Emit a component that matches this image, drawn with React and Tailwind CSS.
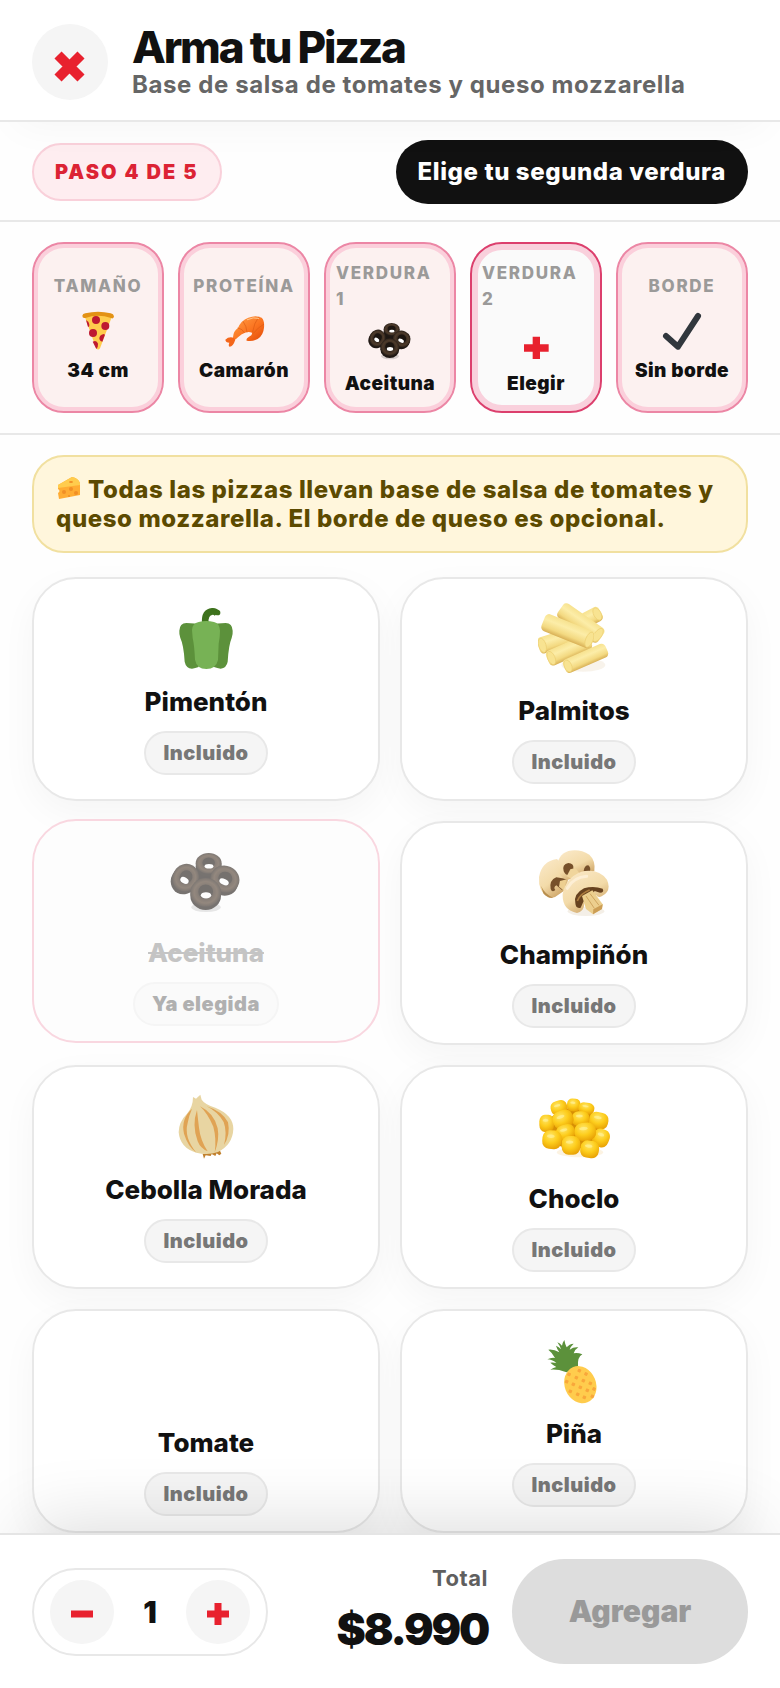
import React, { useState } from 'react';
import clsx from 'clsx';

const PizzaIcon = ({ className }) => (
    <svg viewBox="222 252 144 144" className={className} aria-hidden="true">
        <path d="M254 286 Q294 270 336 286 L300 382 Q294 390 288 381 Z" fill="#ffcc4d" />
        <g fill="#be1931">
            <circle cx="288" cy="297" r="12" />
            <circle cx="316" cy="315" r="12" />
            <circle cx="279" cy="336" r="12" />
            <path d="M258 297 Q269 303 268 316 L264 318 Z" />
            <path d="M311 339 Q297 342 298 354 Q301 362 307 362 L315 341 Z" />
            <path d="M278 362 Q290 356 294 368 Q295 377 289 384 Z" />
        </g>
        <path d="M247 284 Q248 278 256 277 Q294 268 332 277 Q341 279 342 286 Q341 295 333 291 Q294 278 256 291 Q247 293 247 284 Z" fill="#e39215" />
    </svg>
);

const ShrimpIcon = ({ className }) => (
    <svg viewBox="660 252 144 144" className={className} aria-hidden="true">
        <defs>
            <linearGradient id="shrimp" x1="0" y1="0" x2="1" y2="1">
                <stop offset="0" stopColor="#ffa24a" />
                <stop offset="0.55" stopColor="#fb7420" />
                <stop offset="1" stopColor="#e24a08" />
            </linearGradient>
        </defs>
        <path d="M699 349 Q700 330 714 321 Q722 299 745 290 Q768 281 785 290 Q794 298 792 320 Q790 343 773 354 Q756 363 740 359 Q737 352 747 347 Q758 343 756 335 Q746 331 735 335 Q724 339 714 349 Q706 358 700 357 Z" fill="url(#shrimp)" />
        <path d="M701 350 Q686 346 676 356 Q677 365 688 365 Q684 374 689 377 Q699 377 706 356 Z" fill="#f4661a" />
        <path d="M714 321 Q728 323 733 335 M730 302 Q740 316 741 333 M776 288 Q762 306 758 332 M791 310 Q775 318 760 337" fill="none" stroke="#dd5a14" strokeWidth="2" strokeLinecap="round" />
        <path d="M742 296 Q760 287 776 292" fill="none" stroke="#ffc58c" strokeWidth="3" strokeLinecap="round" />
    </svg>
);

const OLIVE_RINGS = [
    { cx: 560, cy: 160, rx: 39, ry: 31, tilt: 0 },
    { cx: 491, cy: 203, rx: 39, ry: 42, tilt: 30 },
    { cx: 609, cy: 207, rx: 44, ry: 40, tilt: 25 },
    { cx: 551, cy: 247, rx: 46, ry: 43, tilt: 0 },
];

const OliveIcon = ({ className }) => (
    <svg viewBox="444 105 216 234" className={className} aria-hidden="true">
        <defs>
            <radialGradient id="olive">
                <stop offset="0.4" stopColor="#33261d" />
                <stop offset="0.75" stopColor="#4e3b2b" />
                <stop offset="1" stopColor="#2a2019" />
            </radialGradient>
        </defs>
        <ellipse cx="552" cy="292" rx="44" ry="14" fill="#000" opacity="0.15" />
        <path d="M500 190 L545 165 L600 190 L600 240 L520 245 Z" fill="#1e1713" />
        {OLIVE_RINGS.map((r) => (
            <g key={r.cx} transform={`rotate(${r.tilt} ${r.cx} ${r.cy})`}>
                <ellipse cx={r.cx} cy={r.cy + 10} rx={r.rx} ry={r.ry} fill="#1f1814" />
                <ellipse cx={r.cx} cy={r.cy} rx={r.rx} ry={r.ry} fill="url(#olive)" />
                <ellipse cx={r.cx} cy={r.cy - 2} rx={r.rx * 0.48} ry={r.ry * 0.5} fill="#1c1510" />
                <ellipse cx={r.cx + 1} cy={r.cy + 9} rx={r.rx * 0.34} ry={r.ry * 0.22} fill="#fff" />
            </g>
        ))}
    </svg>
);

const StepPlusIcon = ({ className }) => (
    <svg viewBox="396 291 144 144" className={className} aria-hidden="true">
        <path d="M458 347 H480 V370 H506 V392 H480 V414 H458 V392 H432 V370 H458 Z" fill="#e8212e" />
    </svg>
);

const CheckIcon = ({ className }) => (
    <svg viewBox="834 252 144 144" className={className} aria-hidden="true">
        <path d="M858 345 L894 377 L954 285" fill="none" stroke="#31373d" strokeWidth="18" strokeLinecap="round" strokeLinejoin="round" />
    </svg>
);

const CheeseIcon = ({ className }) => (
    <svg viewBox="0 0 26 24" className={className} aria-hidden="true">
        <path d="M2 9 L16 1 Q22 2 24 7 L24 19 L3 23 L2 17 Q5 15 2 13 Z" fill="#ffac33" />
        <path d="M2 9 L16 1 Q22 2 24 7 L24 9 L2 12 Z" fill="#ffcc4d" />
        <g fill="#f18f26">
            <circle cx="8" cy="16" r="2" />
            <circle cx="15" cy="13" r="2" />
            <circle cx="20" cy="17" r="2" />
            <circle cx="13" cy="20" r="1" />
            <ellipse cx="15" cy="6" rx="2" ry="1" />
        </g>
    </svg>
);

const PepperIcon = ({ className }) => (
    <svg viewBox="450 114 216 207" className={className} aria-hidden="true">
        <path d="M556 174 Q553 142 577 139 Q586 138 592 146" fill="none" stroke="#3e721d" strokeWidth="20" strokeLinejoin="round" />
        <circle cx="593" cy="143" r="8" fill="#3e721d" />
        <path d="M478 197 Q479 175 499 174 L536 176 V306 Q526 310 516 311 Q498 310 494 290 Q491 240 481 219 Q477 208 478 197 Z M638 197 Q637 175 617 174 L582 176 V306 Q592 310 602 311 Q620 308 623 290 Q626 240 635 219 Q639 208 638 197 Z" fill="#5c913b" />
        <path d="M516 195 Q517 175 536 171 Q558 165 582 171 Q599 175 600 197 Q600 215 596 236 L594 285 Q588 312 559 312 Q530 311 525 284 Q523 240 518 219 Z" fill="#77b255" />
    </svg>
);

// x1,y1 and x2,y2 are the centres of the two ends; face marks the end that shows its cut
const PALM_STICKS = [
    { x1: 590, y1: 164, x2: 622, y2: 147, w: 46, face: 2 },
    { x1: 457, y1: 241, x2: 540, y2: 215, w: 50, face: 1 },
    { x1: 484, y1: 279, x2: 590, y2: 232, w: 48, face: 1 },
    { x1: 521, y1: 138, x2: 624, y2: 210, w: 52, face: 2 },
    { x1: 471, y1: 173, x2: 598, y2: 224, w: 54, face: 2 },
    { x1: 534, y1: 303, x2: 639, y2: 257, w: 44, face: 1 },
];

const PalmitosIcon = ({ className }) => (
    <svg viewBox="444 114 216 234" className={className} aria-hidden="true">
        <defs>
            <linearGradient id="palm" x1="0" y1="0" x2="0" y2="1">
                <stop offset="0" stopColor="#f7e28f" />
                <stop offset="0.35" stopColor="#fceda8" />
                <stop offset="0.75" stopColor="#f3d981" />
                <stop offset="1" stopColor="#d9b157" />
            </linearGradient>
        </defs>
        <ellipse cx="580" cy="300" rx="66" ry="20" fill="#b98a3a" opacity="0.1" />
        {PALM_STICKS.map((s) => {
            const angle = (Math.atan2(s.y2 - s.y1, s.x2 - s.x1) * 180) / Math.PI;
            const length = Math.hypot(s.x2 - s.x1, s.y2 - s.y1);
            return (
                <g key={s.x1} transform={`translate(${s.x1} ${s.y1}) rotate(${angle})`}>
                    <rect x="-12" y={-s.w / 2} width={length + 24} height={s.w} rx="13" fill="url(#palm)" />
                    <ellipse cx={s.face === 2 ? length : 0} cy="0" rx="11" ry={s.w / 2 - 3} fill="#f8e391" stroke="#ecce72" strokeWidth="2" />
                </g>
            );
        })}
    </svg>
);

const MushroomIcon = ({ className }) => (
    <svg viewBox="444 111 216 234" className={className} aria-hidden="true">
        <defs>
            <linearGradient id="mushroom" x1="0" y1="0" x2="0.6" y2="1">
                <stop offset="0" stopColor="#fbeacb" />
                <stop offset="0.6" stopColor="#f3dba9" />
                <stop offset="1" stopColor="#cda365" />
            </linearGradient>
        </defs>
        <ellipse cx="588" cy="304" rx="55" ry="14" fill="#a87a3a" opacity="0.12" />
        <path d="M501 147 Q455 154 447 201 Q444 244 474 262 Q490 268 504 255 L526 240 L540 190 Z" fill="url(#mushroom)" />
        <path d="M453 228 Q465 254 490 263 Q473 266 460 250 Z" fill="#b88e4e" />
        <path d="M499 202 Q477 211 482 237 Q486 249 496 240 Q489 232 499 226 L517 241 L530 207 Z" fill="#76502a" />
        <path d="M510 213 L530 208 L522 242 L507 230 Z" fill="#edcf91" />
        <path d="M502 174 Q501 135 535 123 Q568 115 598 134 Q617 151 613 183 L570 204 L530 209 Q506 201 502 174 Z" fill="url(#mushroom)" />
        <path d="M521 184 Q515 163 535 159 Q552 161 550 174 Q555 185 541 193 Q530 201 521 184 Z" fill="#76502a" />
        <path d="M581 183 Q583 166 595 166 Q603 172 600 184 Z" fill="#76502a" />
        <path d="M541 178 L556 174 L569 190 L547 208 L530 199 Z" fill="#f0d59c" />
        <path d="M518 252 Q526 204 574 185 Q625 174 651 209 Q666 244 635 259 Q624 264 618 255 L583 280 Q583 304 561 309 Q516 301 518 252 Z" fill="url(#mushroom)" />
        <path d="M556 279 Q550 252 582 235 Q610 226 638 236 Q644 247 630 248 L614 243 L604 257 L580 275 L572 293 Q557 297 556 279 Z" fill="#67421f" />
        <path d="M562 273 Q570 251 599 240" fill="none" stroke="#ab7b3e" strokeWidth="5" />
        <path d="M576 258 L607 241 L638 283 L636 297 L609 313 L588 297 Z" fill="#eccf8e" />
        <path d="M588 258 L613 295 M600 251 L627 286" stroke="#cfa55f" strokeWidth="3" />
        <path d="M610 298 L638 283 L636 297 L609 313 Z" fill="#cc9e55" />
        <path d="M532 235 Q550 202 590 199" fill="none" stroke="#fff4df" strokeWidth="9" strokeLinecap="round" opacity="0.7" />
    </svg>
);

const OnionIcon = ({ className }) => (
    <svg viewBox="450 108 216 207" className={className} aria-hidden="true">
        <path d="M548 297 L552 311 L557 301 L572 303 L575 297 L586 303 L590 295 L598 301 L604 296 L600 287 Z" fill="#c1812e" />
        <path d="M519 126 L528 131 L541 119 L545 134 Q554 148 586 158 Q640 180 640 222 Q638 269 594 291 Q563 302 529 293 Q480 279 476 232 Q476 201 501 176 Q519 156 519 126 Z" fill="#e8d5a2" />
        <path d="M516 161 Q482 192 492 236 Q504 275 529 293 Q491 247 503 204 Q506 184 516 161 Z" fill="#e0a354" />
        <path d="M531 165 Q515 211 533 259 Q541 280 563 289 Q541 255 537 218 Q533 185 531 165 Z" fill="#e0a354" />
        <path d="M540 154 Q562 174 580 215 Q590 252 584 293 Q599 253 593 220 Q583 175 540 154 Z" fill="#e0a354" />
        <path d="M560 154 Q593 170 611 201 Q622 231 612 270 Q632 239 624 202 Q607 169 560 154 Z" fill="#e0a354" />
    </svg>
);

const KERNELS = [
    [507, 158, 25, 21, -15], [551, 150, 20, 19, 5], [589, 160, 24, 17, 10], [470, 205, 22, 26, 0],
    [626, 197, 29, 25, 12], [572, 191, 26, 22, 0], [519, 193, 31, 27, -20], [527, 232, 28, 23, -15],
    [633, 249, 25, 27, 20], [486, 254, 29, 28, 5], [586, 230, 32, 27, -5], [599, 283, 28, 26, 8], [543, 271, 28, 28, 0],
];

const CornIcon = ({ className }) => (
    <svg viewBox="444 108 216 234" className={className} aria-hidden="true">
        <defs>
            <radialGradient id="kernel" cx="0.42" cy="0.3" r="0.75">
                <stop offset="0" stopColor="#ffe566" />
                <stop offset="0.5" stopColor="#fdcd1c" />
                <stop offset="1" stopColor="#e79f04" />
            </radialGradient>
        </defs>
        <ellipse cx="570" cy="292" rx="70" ry="15" fill="#e79b14" opacity="0.12" />
        <ellipse cx="552" cy="220" rx="80" ry="62" fill="#d68f05" />
        {KERNELS.map(([cx, cy, rx, ry, tilt]) => (
            <g key={`${cx}-${cy}`} transform={`rotate(${tilt} ${cx} ${cy})`}>
                <rect x={cx - rx} y={cy - ry} width={rx * 2} height={ry * 2} rx={rx * 0.75} ry={ry * 0.8} fill="url(#kernel)" />
                <ellipse cx={cx - rx * 0.15} cy={cy - ry * 0.35} rx={rx * 0.4} ry={ry * 0.18} fill="#fff3a0" opacity="0.6" />
            </g>
        ))}
    </svg>
);

const PINE_DOTS = [
    [568, 212], [588, 222], [537, 223], [559, 233], [580, 242], [601, 250], [530, 245], [550, 253],
    [571, 262], [592, 271], [612, 267], [541, 274], [563, 283], [583, 292], [607, 289],
];

const PineappleIcon = ({ className }) => (
    <svg viewBox="444 105 216 207" className={className} aria-hidden="true">
        <path d="M527 216 Q503 207 481 209 Q490 203 499 201 Q487 194 481 188 Q490 187 499 189 Q486 178 472 178 Q484 172 495 174 Q487 158 475 149 Q491 147 508 157 Q500 145 498 137 Q507 141 513 148 Q509 136 502 127 Q510 130 516 137 Q518 127 523 120 Q525 132 530 142 Q538 132 551 131 Q541 140 539 149 Q551 140 565 142 Q554 149 551 160 Q562 157 577 163 Q562 171 564 199 L530 217 Z" fill="#5c913b" />
        <ellipse cx="571" cy="254" rx="47" ry="57" transform="rotate(-22 571 254)" fill="#ffcc4d" />
        {PINE_DOTS.map(([x, y]) => (
            <rect key={`${x}-${y}`} x={x - 5} y={y - 5} width="10" height="10" rx="2" transform={`rotate(25 ${x} ${y})`} fill="#f9a73b" />
        ))}
    </svg>
);

const STEPS = [
    { label: 'Tamaño', value: '34 cm', Icon: PizzaIcon },
    { label: 'Proteína', value: 'Camarón', Icon: ShrimpIcon },
    { label: 'Verdura 1', value: 'Aceituna', Icon: OliveIcon },
    { label: 'Verdura 2', value: 'Elegir', Icon: StepPlusIcon, active: true },
    { label: 'Borde', value: 'Sin borde', Icon: CheckIcon },
];

// photo: the icon is a picture, which sits in a slightly taller box than an emoji
const VEGGIES = [
    { name: 'Pimentón', Icon: PepperIcon },
    { name: 'Palmitos', Icon: PalmitosIcon, photo: true },
    { name: 'Aceituna', Icon: OliveIcon, photo: true, taken: true },
    { name: 'Champiñón', Icon: MushroomIcon, photo: true },
    { name: 'Cebolla Morada', Icon: OnionIcon },
    { name: 'Choclo', Icon: CornIcon, photo: true },
    { name: 'Tomate', photo: true },
    { name: 'Piña', Icon: PineappleIcon },
];

const StepCard = ({ step }) => {
    const { label, value, Icon, active } = step;
    return (
        <button
            type="button"
            className={clsx(
                'flex min-h-[171px] min-w-0 flex-col items-center justify-center rounded-[32px] border-2 px-2.5',
                active
                    ? 'border-[#dc3f6d] bg-[#fafafa] inset-shadow-[0_0_0_6px_#f9d0dc]'
                    : 'border-[#ec86a5] bg-[#fcf1f0] inset-shadow-[0_0_0_4px_#fbcfdb]'
            )}
        >
            <span className="text-left text-[17px] leading-[26px] font-extrabold tracking-widest text-[#9b9a99] uppercase">{label}</span>
            <Icon className="my-1.5 size-12" />
            <span className="text-[19px] leading-6 font-black tracking-wide whitespace-nowrap text-[#111]">{value}</span>
        </button>
    );
};

const VeggieCard = ({ item }) => {
    const { name, Icon, photo, taken } = item;
    return (
        <button
            type="button"
            disabled={taken}
            className={clsx(
                'flex min-h-[224px] flex-col items-center rounded-[44px] border-2 pt-6',
                taken
                    ? '-translate-y-0.5 border-[#f9d7e0] bg-[#fdfdfd]'
                    : 'border-[#e8e8e8] bg-white shadow-[0_12px_36px_rgba(0,0,0,0.04)]'
            )}
        >
            <span className={clsx('block w-[72px]', photo ? 'h-[78px]' : 'h-[69px]', taken && 'opacity-60')}>
                {Icon && <Icon className="size-full" />}
            </span>
            <span
                className={clsx(
                    'mt-3.5 text-[26px] leading-[31px] font-extrabold',
                    taken ? 'text-[#c4c4c4] line-through' : 'text-[#111]'
                )}
            >
                {name}
            </span>
            <span
                className={clsx(
                    'mt-3.5 rounded-full border-2 px-[17px] text-xl leading-10 font-black tracking-wide',
                    taken ? 'border-[#f5f5f5] bg-[#fafafa] text-[#b0b0b0]' : 'border-[#e8e8e8] bg-[#f5f5f5] text-[#777]'
                )}
            >
                {taken ? 'Ya elegida' : 'Incluido'}
            </span>
        </button>
    );
};

const App = () => {
    const [quantity, setQuantity] = useState(1);

    return (
        <div className="flex min-h-screen flex-col bg-[#fefefe] font-['Inter',sans-serif] text-[#111]">
            <header className="z-10 flex items-center gap-6 border-b-2 border-[#e8e8e8] bg-white px-8 pt-6 pb-5 shadow-[0_20px_40px_-16px_rgba(0,0,0,0.04)]">
                <button type="button" aria-label="Cerrar" className="size-[76px] shrink-0 rounded-full bg-[#f5f5f5]">
                    <svg viewBox="0 0 76 76" className="size-full" aria-hidden="true">
                        <path d="M26 31 L49 54 M49 31 L26 54" stroke="#e8212e" strokeWidth="10" />
                    </svg>
                </button>
                <div>
                    <h1 className="text-[44px] leading-[46px] font-extrabold tracking-tighter">Arma tu Pizza</h1>
                    <p className="text-2xl leading-[30px] font-bold tracking-wide text-[#666]">Base de salsa de tomates y queso mozzarella</p>
                </div>
            </header>

            <div className="flex items-center justify-between border-b-2 border-[#e8e8e8] px-8 pt-[18px] pb-4">
                <span className="rounded-full border-2 border-[#f9d0da] bg-[#feedf0] px-[21px] text-xl leading-[54px] font-black tracking-widest text-[#dc2334] uppercase">
                    Paso 4 de 5
                </span>
                <span className="rounded-full bg-[#111] px-[22px] text-2xl leading-[64px] font-extrabold tracking-wide text-white">
                    Elige tu segunda verdura
                </span>
            </div>

            <nav aria-label="Pasos" className="grid grid-cols-5 gap-3.5 border-b-2 border-[#e8e8e8] px-8 py-5">
                {STEPS.map((step) => (
                    <StepCard key={step.label} step={step} />
                ))}
            </nav>

            <main className="flex-1 px-8 pt-5">
                <p className="rounded-[32px] border-2 border-[#f1e0a0] bg-[#fff6dc] px-[22px] py-[18px] text-2xl leading-[29px] font-extrabold tracking-wide text-[#5c4a00]">
                    <CheeseIcon className="mr-1.5 inline-block h-6 w-[26px] align-[-2px]" />
                    Todas las pizzas llevan base de salsa de tomates y queso mozzarella. El borde de queso es opcional.
                </p>
                <div className="mt-6 grid grid-cols-2 gap-5">
                    {VEGGIES.map((item) => (
                        <VeggieCard key={item.name} item={item} />
                    ))}
                </div>
            </main>

            <footer className="sticky bottom-0 z-10 flex items-center border-t-2 border-[#e5e5e5] bg-white px-8 py-6 shadow-[0_-36px_72px_-28px_rgba(0,0,0,0.14)]">
                <div className="flex h-[88px] w-[236px] items-center justify-between rounded-full border-2 border-[#e8e8e8] px-4">
                    <button type="button" aria-label="Quitar una" className="size-16 rounded-full bg-[#f5f5f5]" onClick={() => setQuantity(Math.max(1, quantity - 1))}>
                        <svg viewBox="0 0 64 64" className="size-full" aria-hidden="true">
                            <path d="M21 34 H43" stroke="#e8212e" strokeWidth="7" />
                        </svg>
                    </button>
                    <span className="text-3xl font-black">{quantity}</span>
                    <button type="button" aria-label="Agregar una" className="size-16 rounded-full bg-[#f5f5f5]" onClick={() => setQuantity(quantity + 1)}>
                        <svg viewBox="0 0 64 64" className="size-full" aria-hidden="true">
                            <path d="M21 34 H43 M32 23 V45" stroke="#e8212e" strokeWidth="7" />
                        </svg>
                    </button>
                </div>
                <div className="ml-auto pb-1.5 text-right">
                    <p className="text-[22px] leading-8 font-bold tracking-wide text-[#5f5f5f]">Total</p>
                    <p className="mt-2 text-[44px] leading-[54px] font-black tracking-tighter">$8.990</p>
                </div>
                <button type="button" disabled className="ml-6 h-[105px] w-[236px] rounded-full bg-[#ddd] text-[30px] font-black text-[#999]">
                    Agregar
                </button>
            </footer>
        </div>
    );
};

export default App;
